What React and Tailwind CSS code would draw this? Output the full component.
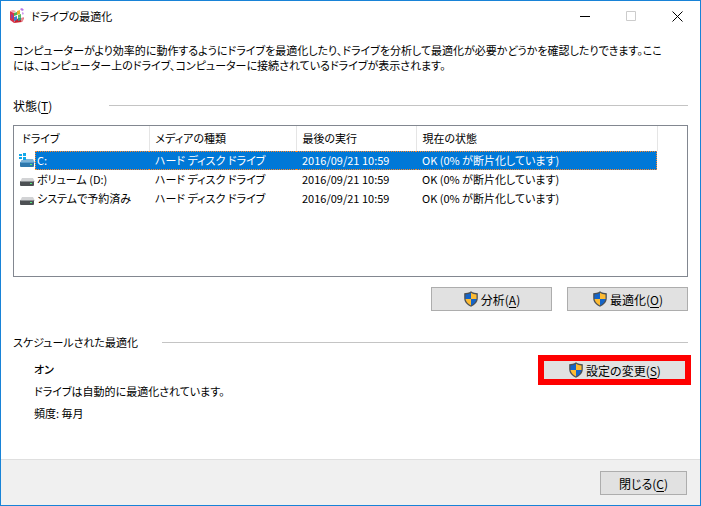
import React, { useState } from 'react';

const drives = [
  { id: 'c', name: 'C:', system: true },
  { id: 'd', name: 'ボリューム (D:)', system: false },
  { id: 'reserved', name: 'システムで予約済み', system: false },
];

const AppIcon = () => (
  <svg className="h-4 w-4" viewBox="0 0 16 16" aria-hidden="true">
    <path d="M1 3l4 2v10l-4-3z" fill="#d9304a" />
    <path d="M5 15l8-1 2-4-9 1z" fill="#c8202e" />
    <path d="M1 3l3-1 3 1-2 2z" fill="#f0a0ac" />
    <path d="M2 6l2 1v4l-2-1z" fill="#8e3f9c" />
    <path d="M5 5l3-1v3l-3 1z" fill="#4fae52" />
    <path d="M8 3l3-1v4l-3 1z" fill="#e8b030" />
    <path d="M5 9l3-1v4l-3 1z" fill="#3c7fd0" />
    <path d="M9 7l3-1v3l-3 1z" fill="#58b860" />
    <path d="M9 10l3-1v3l-3 1z" fill="#2f9a80" />
    <path d="M11 1l2-1 2 2-2 1z" fill="#b778e8" />
    <path d="M13 4l2 1-1 2-1-1z" fill="#cf9bf0" />
    <path d="M12 10l3-1-1 4-2 1z" fill="#e88a92" />
  </svg>
);

const DriveIcon = ({ system }) => (
  <svg className="h-4 w-4 shrink-0" viewBox="0 0 16 16" aria-hidden="true">
    <path d="M3 6h11l2 4H1z" fill={system ? '#7fb3d8' : '#d2d3d5'} />
    <rect x="1" y="9" width="14" height="5" rx="1" fill={system ? '#2f78ad' : '#4d5054'} />
    <path d="M1.500 9.500h13" stroke={system ? '#5a9fce' : '#8b8e92'} />
    <rect x="11" y="11" width="2" height="1" fill="#4cf07a" />
    {system && (
      <g>
        <rect x="0" y="0" width="7" height="7" fill="#fff" />
        <path d="M0 1h3v2H0zM4 0h3v3H4zM0 4h3v2H0zM4 4h3v3H4z" fill="#12a8ea" />
      </g>
    )}
  </svg>
);

const Shield = () => (
  <svg className="h-4 w-4 shrink-0" viewBox="0 0 16 16" aria-hidden="true">
    <path d="M8 0.300C6 1.700 3.500 2.200 1.200 2.200V7c0 4.200 3 7 6.800 8.800C11.800 14 14.800 11.200 14.800 7V2.200C12.500 2.200 10 1.700 8 .3z" fill="#4c5054" />
    <path d="M8 1.800C6.400 2.800 4.500 3.300 2.500 3.400V8H8z" fill="#1464c8" />
    <path d="M8 1.800c1.600 1 3.500 1.500 5.500 1.600V8H8z" fill="#fdbb33" />
    <path d="M2.500 8c.5 2.800 2.600 4.900 5.500 6.400V8z" fill="#fdbb33" />
    <path d="M13.500 8c-.5 2.800-2.600 4.900-5.500 6.400V8z" fill="#1464c8" />
  </svg>
);

const Label = ({ text, hotkey }) => (
  <span>
    {text}(<u className="underline-offset-2">{hotkey}</u>)
  </span>
);

const buttonClass = 'flex h-6 items-center justify-center gap-0.5 border border-[#adadad] bg-[#e1e1e1] text-xs leading-[15px]';

const App = () => {
  const [selected, setSelected] = useState('c');

  return (
    <div className="flex min-h-screen flex-col border border-[#1883d7] bg-white font-['Noto_Sans_CJK_JP',sans-serif] text-[11px] leading-[15px] text-black [font-feature-settings:'palt']">
      <header className="flex h-[30px] items-center">
        <div className="flex flex-1 items-center gap-1.5 pl-2">
          <AppIcon />
          <h1>ドライブの最適化</h1>
        </div>
        <button type="button" aria-label="最小化" className="flex h-full w-[46px] items-center justify-center">
          <svg className="h-[11px] w-[11px]" viewBox="0 0 11 11">
            <path d="M0 5.500h10" stroke="#000" />
          </svg>
        </button>
        <button type="button" aria-label="最大化" disabled className="flex h-full w-[46px] items-center justify-center">
          <svg className="h-[11px] w-[11px]" viewBox="0 0 11 11">
            <path d="M.5.5h9v9h-9z" fill="none" stroke="#ccc" />
          </svg>
        </button>
        <button type="button" aria-label="閉じる" className="flex h-full w-[46px] items-center justify-center">
          <svg className="h-[11px] w-[11px]" viewBox="0 0 11 11">
            <path d="M.5.5l10 10M10.500.5l-10 10" stroke="#000" />
          </svg>
        </button>
      </header>

      <main className="flex flex-1 flex-col px-3 pt-3 pb-8">
        <p>
          コンピューターがより効率的に動作するようにドライブを最適化したり、ドライブを分析して最適化が必要かどうかを確認したりできます。ここ
          <br />
          には、コンピューター上のドライブ、コンピューターに接続されているドライブが表示されます。
        </p>

        <div className="mt-[25px] flex items-center">
          <h2 className="w-24 text-xs leading-[15px]">
            <Label text="状態" hotkey="T" />
          </h2>
          <hr className="flex-1 border-[#c4c4c4]" />
        </div>

        <div className="mt-3 min-h-38 border border-[#828790]">
          <table className="w-full table-fixed text-left">
            <colgroup>
              <col className="w-[135px]" />
              <col className="w-[147px]" />
              <col className="w-[120px]" />
              <col className="w-[241px]" />
              <col />
            </colgroup>
            <thead>
              <tr className="h-[25px]">
                <th className="border-r border-[#e5e5e5] pl-2 font-normal">ドライブ</th>
                <th className="border-r border-[#e5e5e5] pl-1.5 font-normal">メディアの種類</th>
                <th className="border-r border-[#e5e5e5] pl-1.5 font-normal">最後の実行</th>
                <th className="border-r border-[#e5e5e5] pl-1.5 font-normal">現在の状態</th>
                <td></td>
              </tr>
            </thead>
            <tbody>
              {drives.map((drive) => {
                const active = drive.id === selected;
                const cell = active
                  ? 'border-y border-dotted border-[#ff8728] bg-[#0078d7] text-white'
                  : 'border-y border-transparent';
                return (
                  <tr key={drive.id} onClick={() => setSelected(drive.id)}>
                    <td>
                      <div className="flex items-center pl-[5px]">
                        <DriveIcon system={drive.system} />
                        <div className={`flex h-[19px] flex-1 items-center border-l pl-px whitespace-nowrap ${cell}`}>{drive.name}</div>
                      </div>
                    </td>
                    <td>
                      <div className={`flex h-[19px] items-center pl-1.5 whitespace-nowrap ${cell}`}>ハード ディスク ドライブ</div>
                    </td>
                    <td>
                      <div className={`flex h-[19px] items-center pl-1.5 whitespace-nowrap ${cell}`}>2016/09/21 10:59</div>
                    </td>
                    <td>
                      <div className={`flex h-[19px] items-center border-r pl-1.5 whitespace-nowrap ${cell}`}>OK (0% が断片化しています)</div>
                    </td>
                    <td></td>
                  </tr>
                );
              })}
            </tbody>
          </table>
        </div>

        <div className="mt-2.5 flex justify-end gap-[15px]">
          <button type="button" className={`w-[121px] ${buttonClass}`}>
            <Shield />
            <Label text="分析" hotkey="A" />
          </button>
          <button type="button" className={`w-[121px] ${buttonClass}`}>
            <Shield />
            <Label text="最適化" hotkey="O" />
          </button>
        </div>

        <div className="mt-6 flex items-center">
          <h2 className="w-[149px]">スケジュールされた最適化</h2>
          <hr className="flex-1 border-[#c4c4c4]" />
        </div>

        <div className="mt-[5px] flex items-start justify-between pl-[21px]">
          <div className="flex flex-col gap-[7px] pt-[7px]">
            <p className="font-medium">オン</p>
            <p>ドライブは自動的に最適化されています。</p>
            <p>頻度: 毎月</p>
          </div>
          <button
            type="button"
            className="-mr-[3px] flex h-[30px] w-[153px] items-center justify-center gap-0.5 border-6 border-[#fe0000] bg-[#e1e1e1] text-xs leading-[15px]"
          >
            <Shield />
            <Label text="設定の変更" hotkey="S" />
          </button>
        </div>
      </main>

      <footer className="flex justify-end border-t border-[#dfdfdf] bg-[#f0f0f0] px-[13px] pt-[11px] pb-2.5">
        <button type="button" className={`w-[87px] ${buttonClass}`}>
          <Label text="閉じる" hotkey="C" />
        </button>
      </footer>
    </div>
  );
};

export default App;
